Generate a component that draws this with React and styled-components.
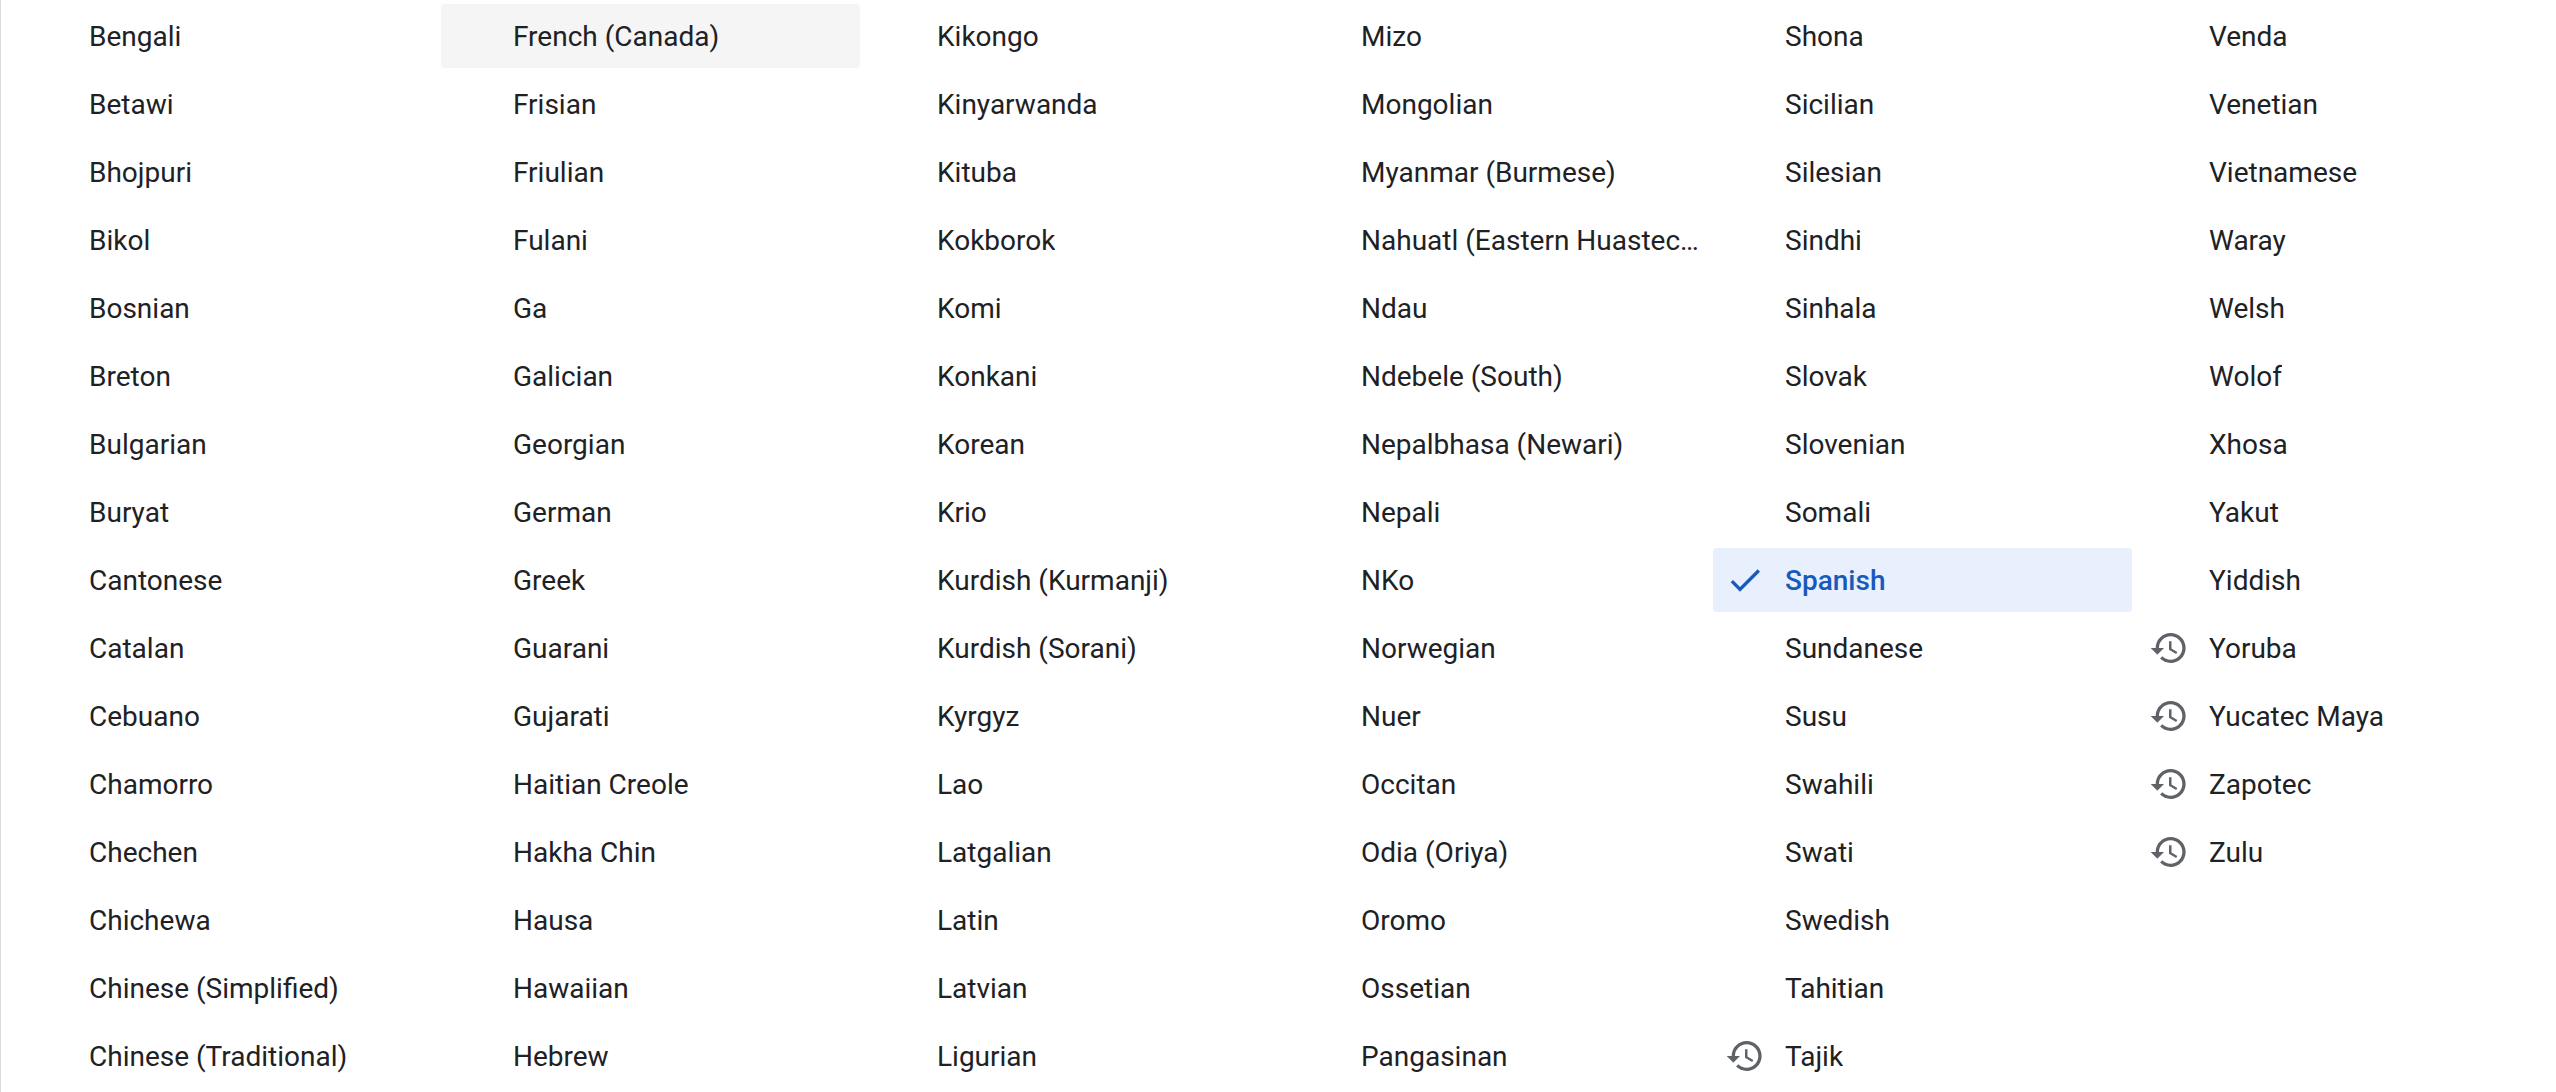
import React, { useState } from "react";
import styled, { createGlobalStyle } from "styled-components";

const GlobalStyle = createGlobalStyle`
  *, *::before, *::after { box-sizing: border-box; }
  body {
    margin: 0;
    background: #fff;
    font-family: Roboto, "Liberation Sans", sans-serif;
  }
`;

const Panel = styled.main`
  min-height: 100vh;
  padding: 4px 0 0 16px;
  border-left: 1px solid #dadce0;
`;

const LanguageGrid = styled.div`
  display: grid;
  grid-template-columns: repeat(6, minmax(0, 1fr));
  column-gap: 5px;
`;

const Column = styled.ul`
  display: flex;
  flex-direction: column;
  gap: 4px;
  margin: 0;
  padding: 0;
  list-style: none;
`;

const LanguageButton = styled.button`
  display: flex;
  align-items: center;
  gap: 20px;
  width: 100%;
  height: 64px;
  padding: 0 8px 0 12px;
  border: 0;
  border-radius: 4px;
  background: ${(p) => (p.$selected ? "#e8f0fe" : p.$active ? "#f5f5f5" : "transparent")};
  color: ${(p) => (p.$selected ? "#185abc" : "#202124")};
  font-family: inherit;
  font-size: 28px;
  font-weight: ${(p) => (p.$selected ? 500 : 400)};
  line-height: 40px;
  text-align: left;
  cursor: pointer;
`;

const IconSlot = styled.span`
  display: flex;
  flex: none;
  width: 40px;
  height: 40px;
  color: ${(p) => (p.$selected ? "inherit" : "#5f6368")};
`;

const Name = styled.span`
  min-width: 0;
  padding-top: 2px;
  overflow: hidden;
  text-overflow: ellipsis;
  white-space: nowrap;
`;

const CheckIcon = () => (
  <svg width="40" height="40" viewBox="0 0 24 24" fill="currentColor" aria-hidden="true">
    <path d="M9 16.17 4.83 12l-1.42 1.41L9 19 21 7l-1.41-1.41z" />
  </svg>
);

const HistoryIcon = () => (
  <svg width="40" height="40" viewBox="0 0 24 24" fill="currentColor" aria-hidden="true">
    <path d="M13 3c-4.97 0-9 4.03-9 9H1l3.89 3.89.07.14L9 12H6c0-3.87 3.13-7 7-7s7 3.13 7 7-3.13 7-7 7c-1.93 0-3.68-.79-4.94-2.06l-1.42 1.42C8.27 19.99 10.51 21 13 21c4.97 0 9-4.03 9-9s-4.03-9-9-9zm-1 5v5l4.28 2.54.72-1.21-3.5-2.08V8H12z" />
  </svg>
);

const columns = [
  ["Bengali", "Betawi", "Bhojpuri", "Bikol", "Bosnian", "Breton", "Bulgarian", "Buryat", "Cantonese", "Catalan", "Cebuano", "Chamorro", "Chechen", "Chichewa", "Chinese (Simplified)", "Chinese (Traditional)"],
  ["French (Canada)", "Frisian", "Friulian", "Fulani", "Ga", "Galician", "Georgian", "German", "Greek", "Guarani", "Gujarati", "Haitian Creole", "Hakha Chin", "Hausa", "Hawaiian", "Hebrew"],
  ["Kikongo", "Kinyarwanda", "Kituba", "Kokborok", "Komi", "Konkani", "Korean", "Krio", "Kurdish (Kurmanji)", "Kurdish (Sorani)", "Kyrgyz", "Lao", "Latgalian", "Latin", "Latvian", "Ligurian"],
  ["Mizo", "Mongolian", "Myanmar (Burmese)", "Nahuatl (Eastern Huasteca)", "Ndau", "Ndebele (South)", "Nepalbhasa (Newari)", "Nepali", "NKo", "Norwegian", "Nuer", "Occitan", "Odia (Oriya)", "Oromo", "Ossetian", "Pangasinan"],
  ["Shona", "Sicilian", "Silesian", "Sindhi", "Sinhala", "Slovak", "Slovenian", "Somali", "Spanish", "Sundanese", "Susu", "Swahili", "Swati", "Swedish", "Tahitian", "Tajik"],
  ["Venda", "Venetian", "Vietnamese", "Waray", "Welsh", "Wolof", "Xhosa", "Yakut", "Yiddish", "Yoruba", "Yucatec Maya", "Zapotec", "Zulu"],
];

const recent = new Set(["Tajik", "Yoruba", "Yucatec Maya", "Zapotec", "Zulu"]);

function Language({ name, selected, active, onSelect, onHover }) {
  return (
    <li>
      <LanguageButton
        type="button"
        $selected={selected}
        $active={active}
        aria-pressed={selected}
        onClick={() => onSelect(name)}
        onMouseEnter={() => onHover(name)}
      >
        <IconSlot $selected={selected}>
          {selected ? <CheckIcon /> : recent.has(name) ? <HistoryIcon /> : null}
        </IconSlot>
        <Name>{name}</Name>
      </LanguageButton>
    </li>
  );
}

export default function App() {
  const [selected, setSelected] = useState("Spanish");
  const [active, setActive] = useState("French (Canada)");

  return (
    <>
      <GlobalStyle />
      <Panel>
        <LanguageGrid>
          {columns.map((names) => (
            <Column key={names[0]}>
              {names.map((name) => (
                <Language
                  key={name}
                  name={name}
                  selected={name === selected}
                  active={name === active}
                  onSelect={setSelected}
                  onHover={setActive}
                />
              ))}
            </Column>
          ))}
        </LanguageGrid>
      </Panel>
    </>
  );
}
